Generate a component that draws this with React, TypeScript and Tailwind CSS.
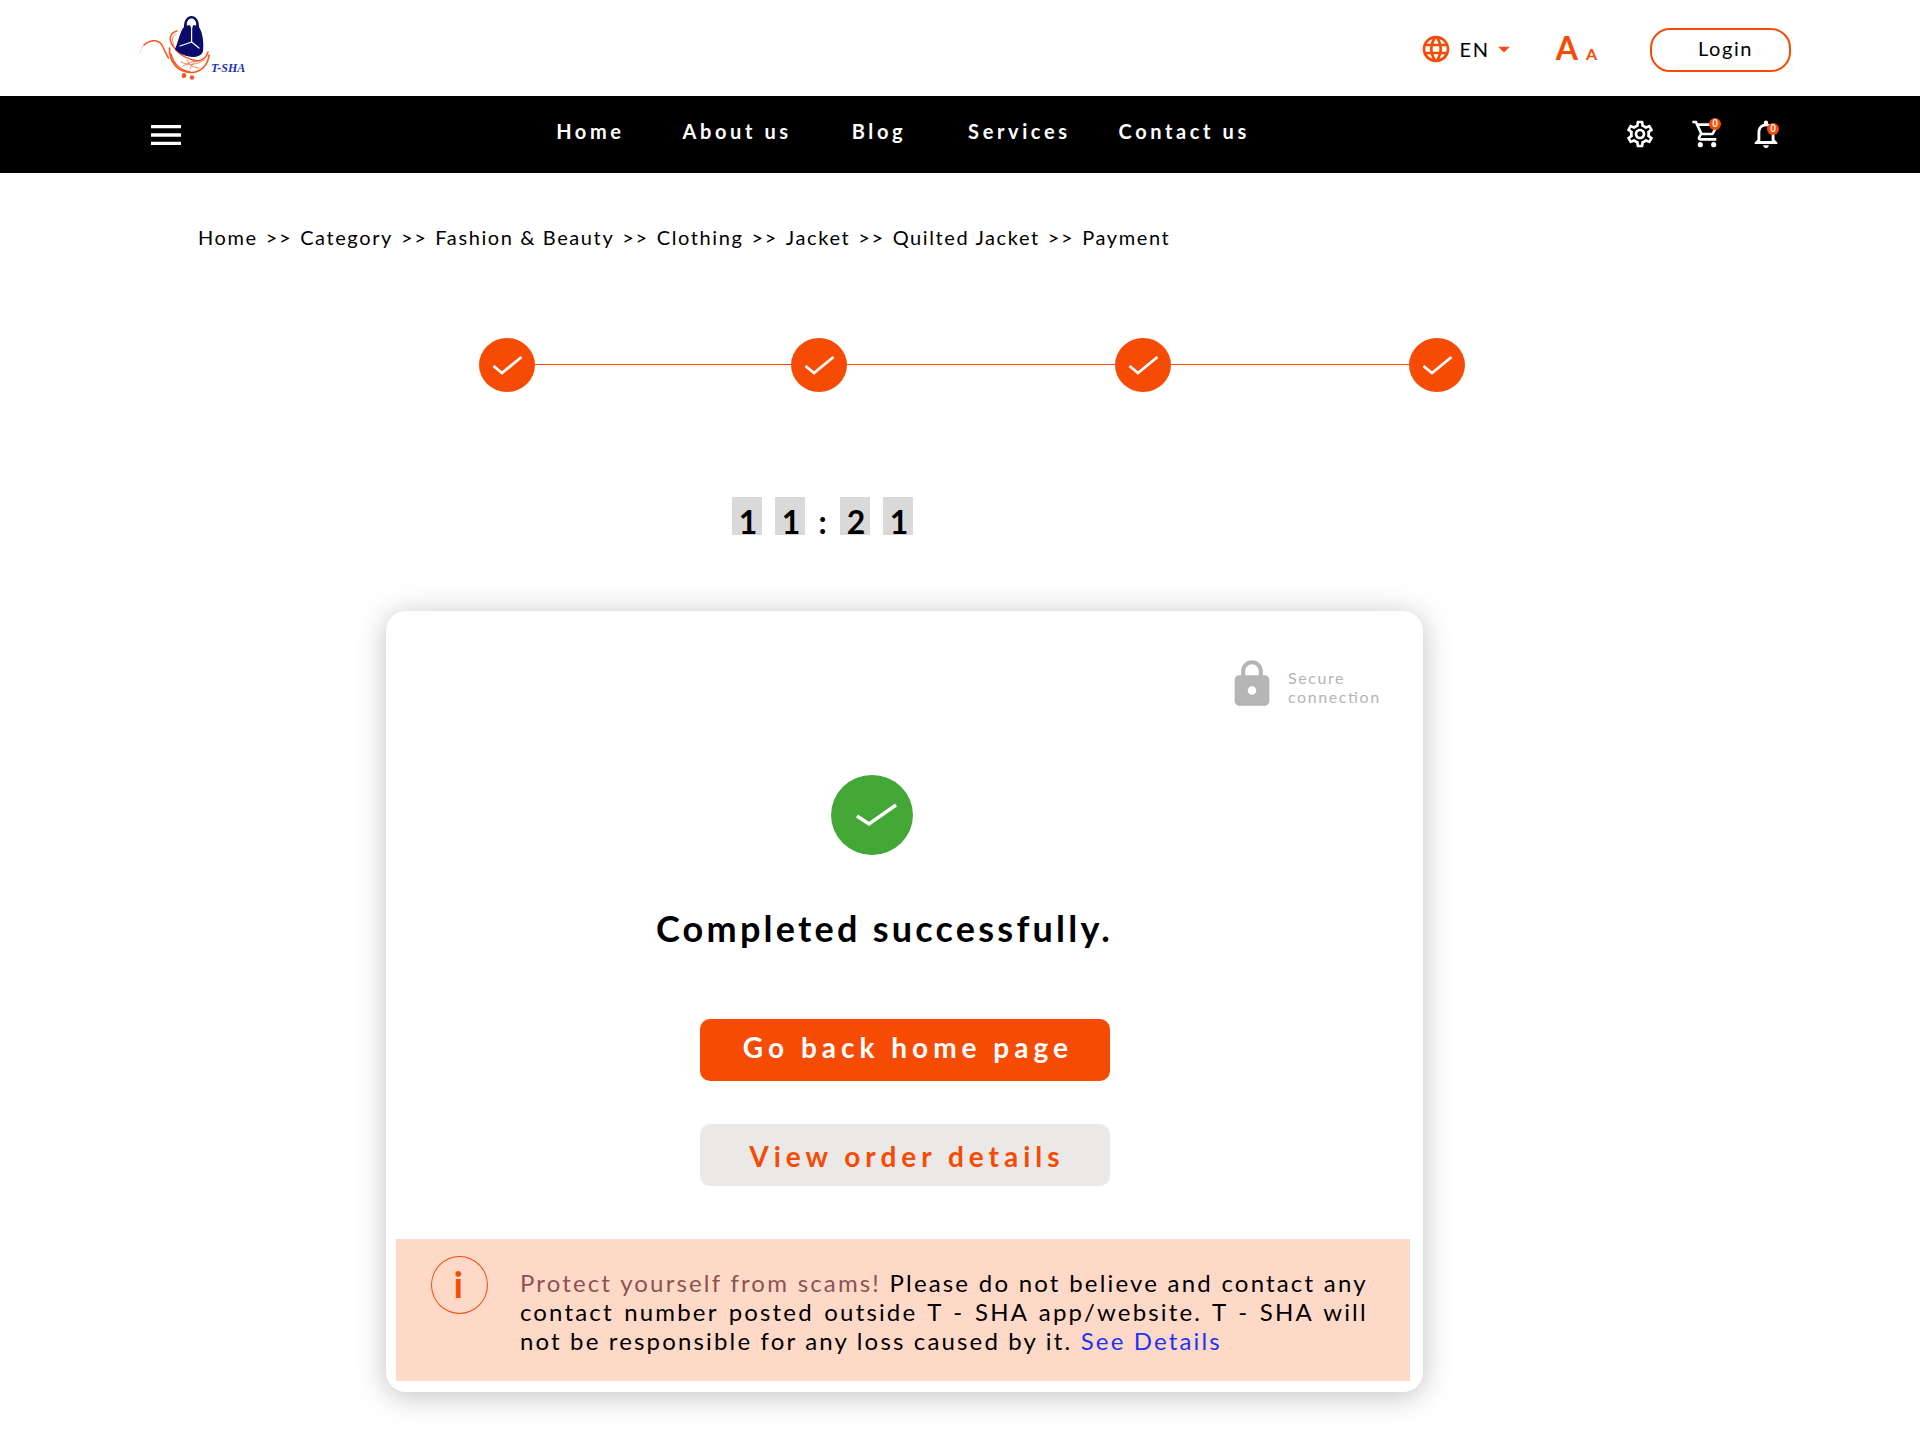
import React from "react";
import {
  MdArrowDropDown,
  MdLanguage,
  MdLock,
  MdMenu,
  MdNotificationsNone,
  MdOutlineSettings,
  MdOutlineShoppingCart,
} from "react-icons/md";

const NAV = [
  { label: "Home", gap: "" },
  { label: "About us", gap: "ml-[58px]" },
  { label: "Blog", gap: "ml-15" },
  { label: "Services", gap: "ml-[62px]" },
  { label: "Contact us", gap: "ml-12" },
];

const CRUMBS = ["Home", "Category", "Fashion & Beauty", "Clothing", "Jacket", "Quilted Jacket", "Payment"];

function Logo() {
  return (
    <svg viewBox="0 0 130 96" className="h-24 w-[130px]" role="img" aria-label="T-SHA">
      <g fill="none" stroke="#f4581c" strokeLinecap="round">
        <path d="M10 53 C11 48 14 44 17 42.500" strokeWidth="0.6" strokeOpacity="0.5" />
        <path d="M14 45 C22 38 30 40 33 47 C35 51 36 54 38.500 58" strokeWidth="1.5" />
        <path d="M47 31 C40 33 38 39 43 46 C47 53 55 58 63 60 C70 62 76 59 78 52" strokeWidth="1.5" />
        <path d="M46 34 C42 36 41 40 44 45" strokeWidth="0.7" />
        <path d="M39.500 48 C39 62 48 72.500 61 72.500 C71 72.500 78 65 79 55" strokeWidth="1.7" />
        <path d="M41 54 C44 65 52 71 60 71.500" strokeWidth="1.2" />
        <path d="M51 62 C58 66 67 65 74 60 M53 66 C60 62 66 60 70 61 M57 60 C58 64 63 68 69 68 M66 61 C63 63 61 66 60 69" strokeWidth="0.7" />
      </g>
      <ellipse cx="54" cy="75.500" rx="2.300" ry="2.600" fill="#f4581c" />
      <ellipse cx="62" cy="77.500" rx="2.200" ry="2.300" fill="#f4581c" />
      <path d="M54 27 C54 20 57 16 61.500 16 C66 16 69 20 69 27 C73 33 74 44 73 51 C72 55 68 57 62 57 C54 56 48 53 45 49 C48 43 50 31 54 27 Z" fill="#0b0b6b" />
      <path d="M57 26 C56 21 59 18.500 61.500 18.500 C64 18.500 67 21 66 26 C64 24 62.500 25 62.300 28 L61 28 C60.500 25 59 24 57 26 Z" fill="#fff" />
      <path d="M61.600 26 L61.600 42 M61.600 42 L50 46 M61.600 42 L69 48" stroke="#fff" strokeWidth="1.200" fill="none" strokeLinecap="round" />
      <text x="81" y="72" fill="#1a34b0" fontFamily="'Liberation Serif', serif" fontStyle="italic" fontWeight="700" fontSize="12">
        T-SHA
      </text>
    </svg>
  );
}

function Step() {
  return (
    <svg viewBox="0 0 56 54" className="h-[54px] w-14 shrink-0" role="img" aria-label="Step completed">
      <ellipse cx="28" cy="27" rx="28" ry="27" fill="#f64b04" />
      <path d="M14.500 28 L23 35 L42.500 19" fill="none" stroke="#fff" strokeWidth="2.800" />
    </svg>
  );
}

function Digit({ value }: { value: string }) {
  return <span className="flex h-[38px] w-[30px] items-end justify-center bg-[#d9d9d9] pl-0.5">{value}</span>;
}

export default function App() {
  return (
    <div className="min-h-screen bg-white pb-14 font-['Lato',sans-serif] text-black">
      <header>
        <div className="flex h-24 items-center justify-between pr-[129px] pl-[130px]">
          <a href="#home">
            <Logo />
          </a>
          <div className="flex items-center pt-1">
            <button type="button" className="flex items-center pb-0.5 text-xl tracking-[0.08em]">
              <MdLanguage className="size-8 text-[#f64b04]" />
              <span className="ml-2">EN</span>
              <MdArrowDropDown className="size-7 text-[#f64b04]" />
            </button>
            <button type="button" aria-label="Text size" className="ml-[38px] flex items-baseline gap-2 pb-1 font-bold text-[#f64b04]">
              <span className="text-[32px] leading-10">A</span>
              <span className="text-base">A</span>
            </button>
            <button
              type="button"
              className="ml-[53px] h-11 w-[141px] rounded-[20px] border-2 border-[#f64b04] pb-1 pl-2.5 text-xl tracking-[0.08em]"
            >
              Login
            </button>
          </div>
        </div>
        <div className="flex h-[77px] items-center justify-between bg-black pr-[137px] pl-[146px] text-white">
          <button type="button" aria-label="Menu">
            <MdMenu className="size-10" />
          </button>
          <nav className="flex pr-1 pb-2 text-xl font-bold tracking-[0.18em]">
            {NAV.map((item) => (
              <a key={item.label} href="#nav" className={item.gap}>
                {item.label}
              </a>
            ))}
          </nav>
          <div className="flex items-center pb-0.5 font-['Roboto',sans-serif] text-[10px] font-medium">
            <button type="button" aria-label="Settings">
              <MdOutlineSettings className="size-8" />
            </button>
            <button type="button" aria-label="Cart" className="relative ml-[35px]">
              <MdOutlineShoppingCart className="size-8" />
              <span className="absolute top-0 right-0.5 flex size-3 items-center justify-center rounded-full bg-[#f64b04]">
                0
              </span>
            </button>
            <button type="button" aria-label="Notifications" className="relative ml-[26px]">
              <MdNotificationsNone className="size-[34px]" />
              <span className="absolute top-1.5 right-1 flex size-3 items-center justify-center rounded-full bg-[#f64b04]">
                0
              </span>
            </button>
          </div>
        </div>
      </header>

      <main>
        <nav aria-label="Breadcrumb" className="mt-[50px] flex gap-2 pl-[198px] text-xl tracking-[0.08em]">
          {CRUMBS.map((crumb, i) => (
            <React.Fragment key={crumb}>
              {i > 0 && <span>&gt;&gt;</span>}
              <a href="#crumb">{crumb}</a>
            </React.Fragment>
          ))}
        </nav>

        <div className="mt-[87px] ml-[479px] flex max-w-[986px] items-center">
          <Step />
          <span className="mb-0.5 h-px grow-[256] bg-[#f64b04]" />
          <Step />
          <span className="mb-0.5 h-px grow-[268] bg-[#f64b04]" />
          <Step />
          <span className="mb-0.5 h-px grow-[238] bg-[#f64b04]" />
          <Step />
        </div>

        <div role="timer" className="mt-[105px] ml-[732px] flex gap-[13px] text-[32px] leading-[26px] font-bold">
          <Digit value="1" />
          <Digit value="1" />
          <span className="flex w-[9px] items-end justify-center">:</span>
          <Digit value="2" />
          <Digit value="1" />
        </div>

        <div className="pr-[25.9%] pl-[20.1%]">
          <section className="mt-[76px] flex w-full flex-col rounded-[20px] bg-white px-2.5 pb-[11px] shadow-[0_4px_30px_rgba(0,0,0,0.25)]">
            <div className="mt-[47px] mr-8 flex items-start gap-2.5 self-end text-[#b5b5b5]">
              <MdLock className="size-[52px]" />
              <p className="mt-2.5 text-base leading-[19px] tracking-widest [font-feature-settings:'liga']">
                Secure
                <br />
                connection
              </p>
            </div>

            <div className="mt-[65px] ml-[304px] flex w-[410px] flex-col">
              <svg viewBox="0 0 82 80" className="ml-[131px] h-20 w-[82px]" role="img" aria-label="Success">
                <ellipse cx="41" cy="40" rx="41" ry="40" fill="#43a735" />
                <path d="M26 41 L38 49 L65 30" fill="none" stroke="#fff" strokeWidth="3.500" />
              </svg>
              <h1 className="mt-[51px] -ml-11 text-4xl leading-[44px] font-bold tracking-[0.09em] whitespace-nowrap">
                Completed successfully.
              </h1>
              <button
                type="button"
                className="mt-[69px] h-[62px] rounded-[10px] bg-[#f64b04] pb-1.5 pl-1.5 text-[28px] font-bold tracking-[5px] text-white"
              >
                Go back home page
              </button>
              <button
                type="button"
                className="mt-[43px] h-[62px] rounded-[10px] bg-[#ebe9e7] pt-0.5 pl-1 text-[28px] font-bold tracking-[5px] text-[#f64b04]"
              >
                View order details
              </button>
            </div>

            <div className="mt-[53px] mr-[3px] flex bg-[#ffd9c8] pt-[17px] pr-[42px] pb-[26px] pl-[35px]">
              <span className="flex h-[58px] w-[57px] shrink-0 items-center justify-center rounded-[50%] border border-[#f64b04] pr-0.5 pb-0.5 text-4xl font-bold text-[#f64b04]">
                i
              </span>
              <p className="mt-3 ml-8 text-justify text-2xl leading-[29px] tracking-[0.09em]">
                <span className="text-[#8d5252]">Protect yourself from scams!</span> Please do not believe and contact any
                contact number posted outside T - SHA app/website. T - SHA will not be responsible for any loss caused by
                it.{" "}
                <a href="#details" className="text-[#2033f5]">
                  See Details
                </a>
              </p>
            </div>
          </section>
        </div>
      </main>
    </div>
  );
}
